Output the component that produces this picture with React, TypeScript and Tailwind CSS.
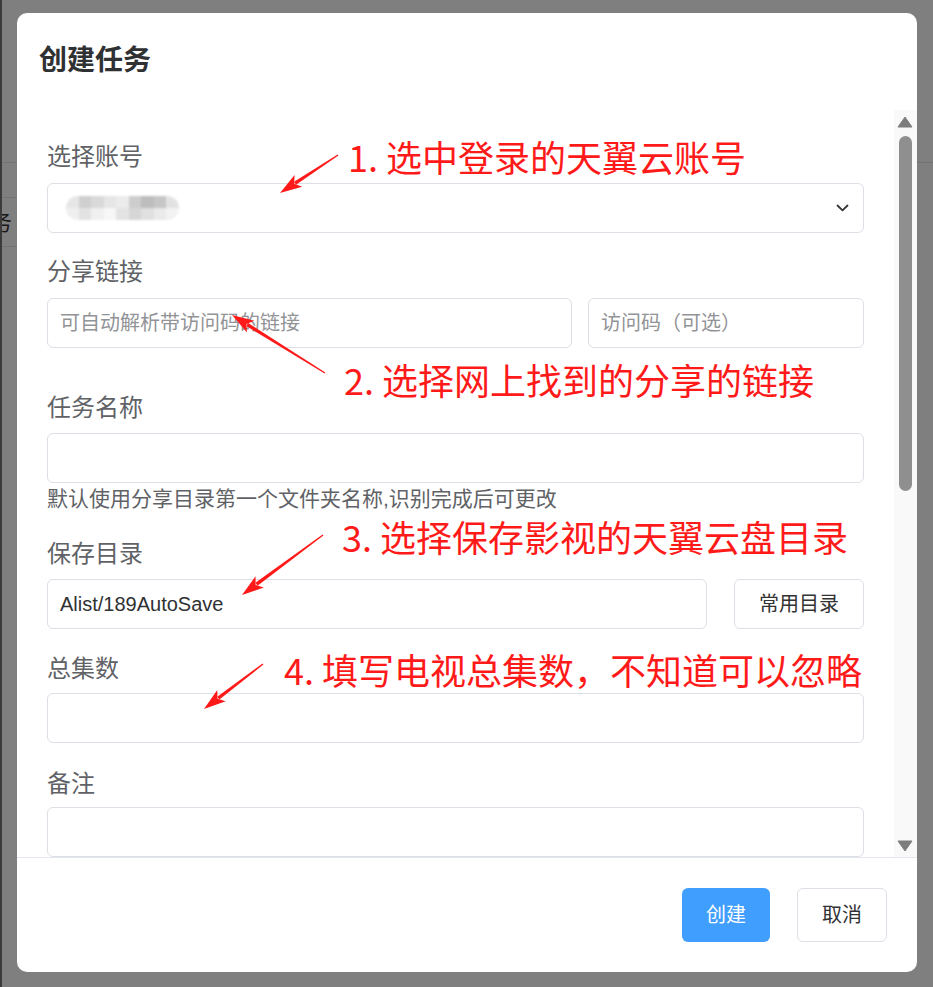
import React from "react";

type ArrowProps = { x1: number; y1: number; x2: number; y2: number };

function Arrow({ x1, y1, x2, y2 }: ArrowProps) {
  const dx = x2 - x1;
  const dy = y2 - y1;
  const len = Math.sqrt(dx * dx + dy * dy);
  const ux = dx / len;
  const uy = dy / len;
  const nx = -uy;
  const ny = ux;
  const L = 22;
  const W = 7;
  const bx = x2 - ux * L;
  const by = y2 - uy * L;
  const shaft = [
    [x1 + nx * 0.7, y1 + ny * 0.7],
    [bx + ux * 4 + nx * 1.8, by + uy * 4 + ny * 1.8],
    [bx + ux * 4 - nx * 1.8, by + uy * 4 - ny * 1.8],
    [x1 - nx * 0.7, y1 - ny * 0.7],
  ]
    .map((p) => p.join(","))
    .join(" ");
  const head = [
    [x2, y2],
    [bx + nx * W, by + ny * W],
    [bx + ux * 5, by + uy * 5],
    [bx - nx * W, by - ny * W],
  ]
    .map((p) => p.join(","))
    .join(" ");
  return (
    <g fill="#ff1a1a">
      <polygon points={shaft} />
      <polygon points={head} />
    </g>
  );
}

function Label({ children, className = "" }: { children: React.ReactNode; className?: string }) {
  return <div className={`text-[24px] leading-[34px] text-[#606266] ${className}`}>{children}</div>;
}

function Field({ children, className = "" }: { children?: React.ReactNode; className?: string }) {
  return (
    <div
      className={`h-[50px] border border-[#dcdfe6] rounded-[6px] pl-[12px] pr-[12px] flex items-center text-[20px] ${className}`}
    >
      {children}
    </div>
  );
}

const blurTop = ["#e6e6e6", "#cfcfcf", "#d9d9d9", "#e6e6e6", "#ececec", "#cdcdcd", "#bdbdbd", "#c6c6c6", "#e2e2e2"];
const blurBottom = ["#efefef", "#e2e2e2", "#f0f0f0", "#f7f7f7", "#e3e3e3", "#d6d6d6", "#e0e0e0", "#eaeaea", "#f2f2f2"];

export default function App() {
  return (
    <div className="relative w-[933px] h-[987px] overflow-hidden bg-white font-['Liberation_Sans','Noto_Sans_CJK_SC',sans-serif]">
      {/* background page */}
      <div className="flex h-full">
        <div className="w-[2px] bg-[#777777]" />
        <div className="flex-1 flex flex-col">
          <div className="h-[163px] border-b border-[#e6e6e6]" />
          <div className="h-[35px] w-[500px] border-b border-[#e6e6e6]" />
          <div className="h-[49px] w-[500px] border-b border-[#e6e6e6] flex items-center overflow-hidden">
            <span className="ml-[-34px] text-[22px] text-[#333] whitespace-nowrap">任务</span>
          </div>
        </div>
      </div>

      {/* overlay + dialog */}
      <div className="absolute inset-0 bg-black/50 pl-[17px] pt-[13px]">
        <div className="w-[900px] h-[959px] bg-white rounded-[10px] flex flex-col overflow-hidden">
          {/* header */}
          <div className="h-[97px] pt-[28px] pl-[22px] shrink-0">
            <div className="text-[28px] leading-[40px] font-bold text-[#303133]">创建任务</div>
          </div>

          {/* body */}
          <div className="flex h-[747px] shrink-0">
            <div className="flex-1 overflow-hidden pl-[30px] pr-[30px] pt-[30px] flex flex-col">
              <Label>选择账号</Label>
              <Field className="mt-[9px] justify-between pr-[14px]">
                <div className="flex flex-col rounded-full overflow-hidden blur-[1px] ml-[6px]">
                  <div className="flex">
                    {blurTop.map((c, i) => (
                      <div key={i} className="w-[12.5px] h-[12px]" style={{ backgroundColor: c }} />
                    ))}
                  </div>
                  <div className="flex">
                    {blurBottom.map((c, i) => (
                      <div key={i} className="w-[12.5px] h-[12px]" style={{ backgroundColor: c }} />
                    ))}
                  </div>
                </div>
                <svg width="13" height="8" viewBox="0 0 13 8" fill="none">
                  <path d="M1.5 1.5 L6.5 6.3 L11.5 1.5" stroke="#333" strokeWidth="1.8" strokeLinecap="round" strokeLinejoin="round" />
                </svg>
              </Field>

              <Label className="mt-[22px]">分享链接</Label>
              <div className="mt-[9px] flex gap-[16px]">
                <Field className="flex-1 text-[#929396]">可自动解析带访问码的链接</Field>
                <Field className="w-[276px] text-[#929396]">访问码（可选）</Field>
              </div>

              <Label className="mt-[43px]">任务名称</Label>
              <Field className="mt-[8px]" />
              <div className="mt-[1px] text-[21px] leading-[30px] text-[#606266]">
                默认使用分享目录第一个文件夹名称,识别完成后可更改
              </div>

              <Label className="mt-[23px]">保存目录</Label>
              <div className="mt-[8px] flex gap-[27px]">
                <Field className="flex-1 text-[#303133]">Alist/189AutoSave</Field>
                <div className="w-[130px] h-[50px] border border-[#dcdfe6] rounded-[6px] flex items-center justify-center text-[20px] text-[#333]">
                  常用目录
                </div>
              </div>

              <Label className="mt-[23px]">总集数</Label>
              <Field className="mt-[7px]" />

              <Label className="mt-[24px]">备注</Label>
              <Field className="mt-[6px] shrink-0" />
            </div>

            {/* scrollbar */}
            <div className="w-[23px] bg-[#f9f9f9] flex flex-col items-center pt-[6px] pb-[5px] pr-[1px]">
              <svg width="16" height="12" viewBox="0 0 16 12">
                <polygon points="8,1 15,11 1,11" fill="#7d7d7d" strokeLinejoin="round" stroke="#7d7d7d" strokeWidth="1" />
              </svg>
              <div className="mt-[8px] w-[13px] h-[355px] rounded-full bg-[#8f8f8f]" />
              <div className="flex-1" />
              <svg width="16" height="12" viewBox="0 0 16 12">
                <polygon points="1,1 15,1 8,11" fill="#7d7d7d" strokeLinejoin="round" stroke="#7d7d7d" strokeWidth="1" />
              </svg>
            </div>
          </div>

          {/* footer */}
          <div className="flex-1 border-t border-[#e4e7ed] flex justify-end items-start pt-[30px] pr-[30px] gap-[27px]">
            <div className="w-[88px] h-[54px] rounded-[6px] bg-[#409eff] text-white text-[20px] flex items-center justify-center">
              创建
            </div>
            <div className="w-[90px] h-[54px] rounded-[6px] border border-[#dcdfe6] bg-white text-[#303133] text-[20px] flex items-center justify-center">
              取消
            </div>
          </div>
        </div>
      </div>

      {/* annotations */}
      <svg className="absolute inset-0 pointer-events-none" width="933" height="987">
        <Arrow x1={338} y1={155} x2={280} y2={193} />
        <Arrow x1={325} y1={373} x2={232} y2={315} />
        <Arrow x1={323} y1={535} x2={242} y2={595} />
        <Arrow x1={263} y1={664} x2={204} y2={709} />
      </svg>
      <div className="absolute left-[348px] top-[138px] text-[36px] leading-none text-[#ff1a1a] whitespace-nowrap font-['Noto_Sans_CJK_SC',sans-serif]">
        1. 选中登录的天翼云账号
      </div>
      <div className="absolute left-[344px] top-[361px] text-[36px] leading-none text-[#ff1a1a] whitespace-nowrap font-['Noto_Sans_CJK_SC',sans-serif]">
        2. 选择网上找到的分享的链接
      </div>
      <div className="absolute left-[342px] top-[518px] text-[36px] leading-none text-[#ff1a1a] whitespace-nowrap font-['Noto_Sans_CJK_SC',sans-serif]">
        3. 选择保存影视的天翼云盘目录
      </div>
      <div className="absolute left-[284px] top-[651px] text-[36px] leading-none text-[#ff1a1a] whitespace-nowrap font-['Noto_Sans_CJK_SC',sans-serif]">
        4. 填写电视总集数，不知道可以忽略
      </div>
    </div>
  );
}
